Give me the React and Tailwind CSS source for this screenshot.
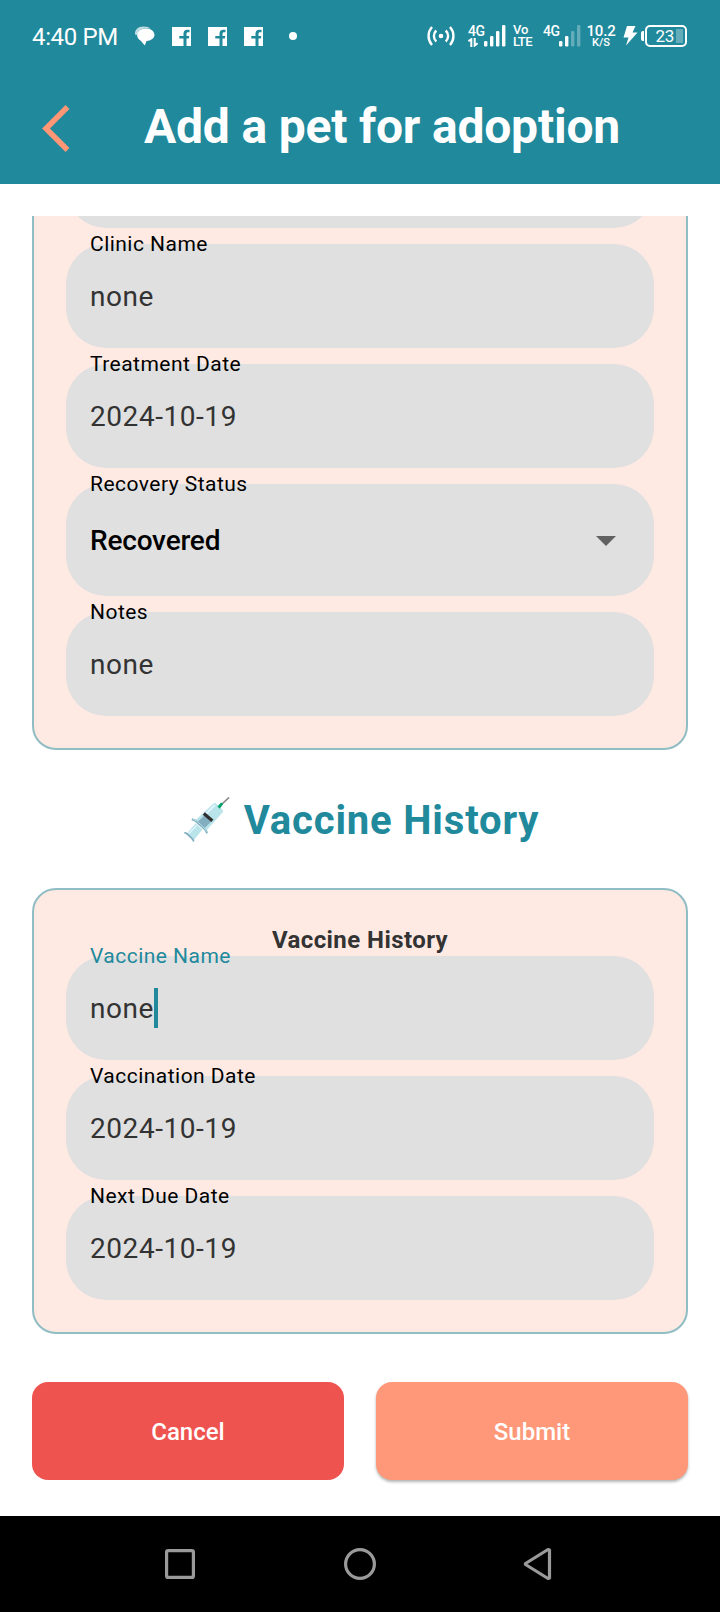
function ChatIcon() {
  return (
    <svg className="h-5 w-[22px]" viewBox="0 0 22 20">
      <path d="M1 8.500C.5 4 4 .6 9.500.6c3.500 0 5.500.8 7 2.200C10 1.600 4.500 3 3 9z" fill="#fff" opacity=".7" />
      <path d="M11.800 2.400c5 0 8.700 2.800 8.700 6.400 0 3.400-3.600 6-8 6.200L10.800 19.500 6.500 14.600C4.500 13.500 3.100 11.500 3.100 9 3.100 5.400 6.800 2.400 11.800 2.400z" fill="#fff" />
    </svg>
  );
}

function FacebookIcon() {
  return (
    <svg className="h-[19px] w-[19px]" viewBox="0 0 19 19">
      <path d="M0 0h19v19h-4.500v-7.400h2.300l.5-2.700h-2.800V6.800c0-.9.5-1.500 1.600-1.500h1.400V2.700h-2.200c-2.500 0-3.800 1.400-3.800 3.700v2.500H7.300v2.700h4.200V19H0z" fill="#fff" fillRule="evenodd" />
    </svg>
  );
}

function HotspotIcon() {
  return (
    <svg className="h-5 w-7" viewBox="0 0 28 20" fill="none" stroke="#fff" strokeWidth="2.400">
      <circle cx="14" cy="10" r="2.300" fill="#fff" stroke="none" />
      <path d="M9.300 4.500a7.500 7.500 0 0 0 0 11M18.700 4.500a7.500 7.500 0 0 1 0 11M5 1a13.500 13.500 0 0 0 0 18M23 1a13.500 13.500 0 0 1 0 18" />
    </svg>
  );
}

function Signal({ weak }) {
  const o = weak ? 0.3 : 1;
  return (
    <svg className="h-[22px] w-[22px]" viewBox="0 0 22 22" fill="#fff">
      <rect x="0" y="16" width="3.400" height="5.500" rx="1.200" />
      <rect x="6" y="11" width="3.400" height="10.500" rx="1.200" />
      <rect x="12" y="6" width="3.400" height="15.500" rx="1.200" opacity={o} />
      <rect x="18" y="0" width="3.400" height="21.500" rx="1.200" opacity={o} />
    </svg>
  );
}

function DataArrows() {
  return (
    <svg className="h-[9px] w-[10px]" viewBox="0 0 10 9" fill="none" stroke="#fff" strokeWidth="2">
      <path d="M.4 3.200 3.300 1.200V9M6.700 0V7.500L9.600 5.300" />
    </svg>
  );
}

function StatusBar() {
  return (
    <div className="flex h-[72px] items-center pl-8 pr-[33px] text-white">
      <span className="w-[102px] whitespace-nowrap pt-px text-[24px] leading-7 tracking-[-0.35px]">4:40 PM</span>
      <ChatIcon />
      <div className="ml-4 flex gap-[17px]">
        <FacebookIcon />
        <FacebookIcon />
        <FacebookIcon />
      </div>
      <span className="ml-[26px] h-2 w-2 rounded-full bg-white" />
      <div className="ml-auto flex items-center">
        <HotspotIcon />
        <div className="ml-[13px] flex h-[22px] w-4 flex-col justify-between">
          <span className="text-[14px] font-medium leading-[12px] tracking-[-0.5px]">4G</span>
          <DataArrows />
        </div>
        <Signal />
        <div className="ml-[7px] flex h-[22px] w-[21px] flex-col text-[13px] font-medium">
          <span className="h-[11px] leading-[10px]">Vo</span>
          <span className="h-[11px] leading-[12px] tracking-[-0.6px]">LTE</span>
        </div>
        <div className="ml-[9px] flex h-[22px] w-4 flex-col">
          <span className="text-[14px] font-medium leading-[12px] tracking-[-0.5px]">4G</span>
        </div>
        <Signal weak />
        <div className="ml-[6px] flex h-[22px] w-7 flex-col items-center font-medium">
          <span className="h-[12px] text-[15px] leading-[12px] tracking-[-0.2px]">10.2</span>
          <span className="h-[10px] text-[11px] leading-[12px]">K/S</span>
        </div>
        <svg className="ml-2 h-5 w-[15px]" viewBox="0 0 15 20" fill="#fff">
          <path d="M4 0h8.500L9.500 6.500H14.500L3 19.500 5.500 11.500H.5z" />
        </svg>
        <span className="ml-[3px] h-[10px] w-[3px] rounded-l-[2px] bg-white" />
        <div className="ml-px flex h-[22px] w-[42px] items-center justify-end rounded-[5px] border-2 border-white pr-[2px]">
          <span className="text-[17px] leading-5 tracking-[-0.3px]">23</span>
          <span className="ml-[2px] h-[14px] w-[7px] bg-white/30" />
        </div>
      </div>
    </div>
  );
}

function Field({ label, value, focused, select }) {
  return (
    <div className={select ? "relative flex h-28 shrink-0 items-center justify-between rounded-[40px] bg-[#e0e0e0] pl-6 pr-[38px] pt-0.5" : "relative flex h-[104px] shrink-0 items-center rounded-[40px] bg-[#e0e0e0] px-6"}>
      <span className={focused ? "absolute -top-3 left-6 whitespace-nowrap text-[21px] leading-6 tracking-[0.47px] text-[#21899c]" : "absolute -top-3 left-6 whitespace-nowrap text-[21px] leading-6 tracking-[0.47px] text-black"}>{label}</span>
      {select ? (
        <>
          <span className="text-[28px] font-medium leading-8 tracking-[-0.2px] text-black">{value}</span>
          <svg className="h-[10px] w-5" viewBox="0 0 20 10"><path d="M0 0h20L10 10z" fill="#616161" /></svg>
        </>
      ) : (
        <span className="pt-0.5 text-[28px] leading-8 tracking-[0.56px] text-[#333]">{value}</span>
      )}
      {focused && <span className="h-10 w-1 bg-[#21899c]" />}
    </div>
  );
}

function Syringe() {
  return (
    <svg className="h-[46px] w-[46px]" viewBox="0 0 46 46" fill="none">
      <path d="m37 8 8-7.500" stroke="#858585" strokeWidth="1.600" />
      <path d="M29.500 6.500 31.500 6 39 13.300 38.500 15.500 22 34 10.500 24z" fill="#b9e4ea" />
      <path d="m20.500 18.500 7 6-7.500 7-6.500-6.500z" fill="#82aec0" />
      <path d="m31 8-9 9" stroke="#e1f5fe" strokeWidth="1.800" />
      <path d="m19.800 16.500 8.600 7.300" stroke="#2f2f2f" strokeWidth="3.200" />
      <path d="m33.500 9.500 3.500-4 2.200 1.400-3.400 4.800z" fill="#00a06b" />
      <path d="m11.500 26.500 7 6L9.500 43.500 2.500 37z" fill="#b9e4ea" />
      <path d="m12.500 28.500-8 8.500" stroke="#e1f5fe" strokeWidth="1.500" />
      <path d="M8.700 22.700c2-.3 4.500 2.600 7 4.800s6.800 5.500 7 8" stroke="#82aec0" strokeWidth="2.200" strokeLinecap="round" />
      <path d="M9.500 22.400c3 .8 11 8 13 11.800" stroke="#b9e4ea" strokeWidth="1" strokeLinecap="round" />
      <path d="M1 35.800c1.200 0 2.500 1.200 4.300 3s4 3.400 4.200 5" stroke="#82aec0" strokeWidth="1.800" strokeLinecap="round" />
    </svg>
  );
}

export default function App() {
  return (
    <div className="flex h-[1612px] w-[720px] flex-col overflow-hidden bg-white font-['Roboto',sans-serif]">
      <header className="h-[184px] shrink-0 bg-[#21899c]">
        <StatusBar />
        <div className="flex h-28 items-center pl-[42px]">
          <svg className="h-12 w-7" viewBox="0 0 28 48" fill="none" stroke="#ff9777" strokeWidth="5.500">
            <path d="M25.500 3 4 24.500 25.500 46" />
          </svg>
          <h1 className="ml-[74px] whitespace-nowrap pb-0.5 text-[48px] font-bold leading-[56px] tracking-[-0.2px] text-white">Add a pet for adoption</h1>
        </div>
      </header>

      <main className="mt-8 flex h-[1300px] shrink-0 flex-col px-8">
        <section className="flex h-[534px] shrink-0 flex-col justify-end gap-4 overflow-hidden rounded-b-[24px] border-2 border-t-0 border-[#90bcc4] bg-[#ffeae3] px-8 pb-8">
          <div className="h-[104px] shrink-0 rounded-[40px] bg-[#e0e0e0]" />
          <Field label="Clinic Name" value="none" />
          <Field label="Treatment Date" value="2024-10-19" />
          <Field label="Recovery Status" value="Recovered" select />
          <Field label="Notes" value="none" />
        </section>

        <div className="flex h-[138px] shrink-0 items-center justify-center gap-[14px] pl-[3px] pt-px">
          <Syringe />
          <h2 className="whitespace-nowrap pt-0.5 text-[40px] font-bold leading-[48px] tracking-[0.83px] text-[#21899c]">Vaccine History</h2>
        </div>

        <section className="flex h-[446px] shrink-0 flex-col gap-4 rounded-[24px] border-2 border-[#90bcc4] bg-[#ffeae3] px-8 pt-8">
          <h3 className="-mb-4 h-[34px] pt-0.5 text-center text-[24px] font-bold leading-8 tracking-[0.43px] text-[#333]">Vaccine History</h3>
          <Field label="Vaccine Name" value="none" focused />
          <Field label="Vaccination Date" value="2024-10-19" />
          <Field label="Next Due Date" value="2024-10-19" />
        </section>

        <div className="mt-12 grid h-[98px] shrink-0 grid-cols-2 gap-8">
          <button className="rounded-[16px] bg-[#ef5350] pt-0.5 text-[24px] font-medium text-white">Cancel</button>
          <button className="rounded-[16px] bg-[#ff9878] pt-0.5 text-[24px] font-medium text-white shadow-[0_2px_3px_rgba(0,0,0,0.3)]">Submit</button>
        </div>
      </main>

      <nav className="flex h-24 shrink-0 items-center justify-center bg-black">
        <svg className="h-9 w-[400px]" viewBox="0 0 400 36" fill="none" stroke="#9a9a9a" strokeWidth="3.200">
          <rect x="6.600" y="4.600" width="26.800" height="26.800" rx="1.500" />
          <circle cx="200" cy="18" r="14.400" />
          <path d="M365.500 17.500v1l22.500 14 1.500-.5V4l-1.500-.5z" strokeLinejoin="round" />
        </svg>
      </nav>
    </div>
  );
}
